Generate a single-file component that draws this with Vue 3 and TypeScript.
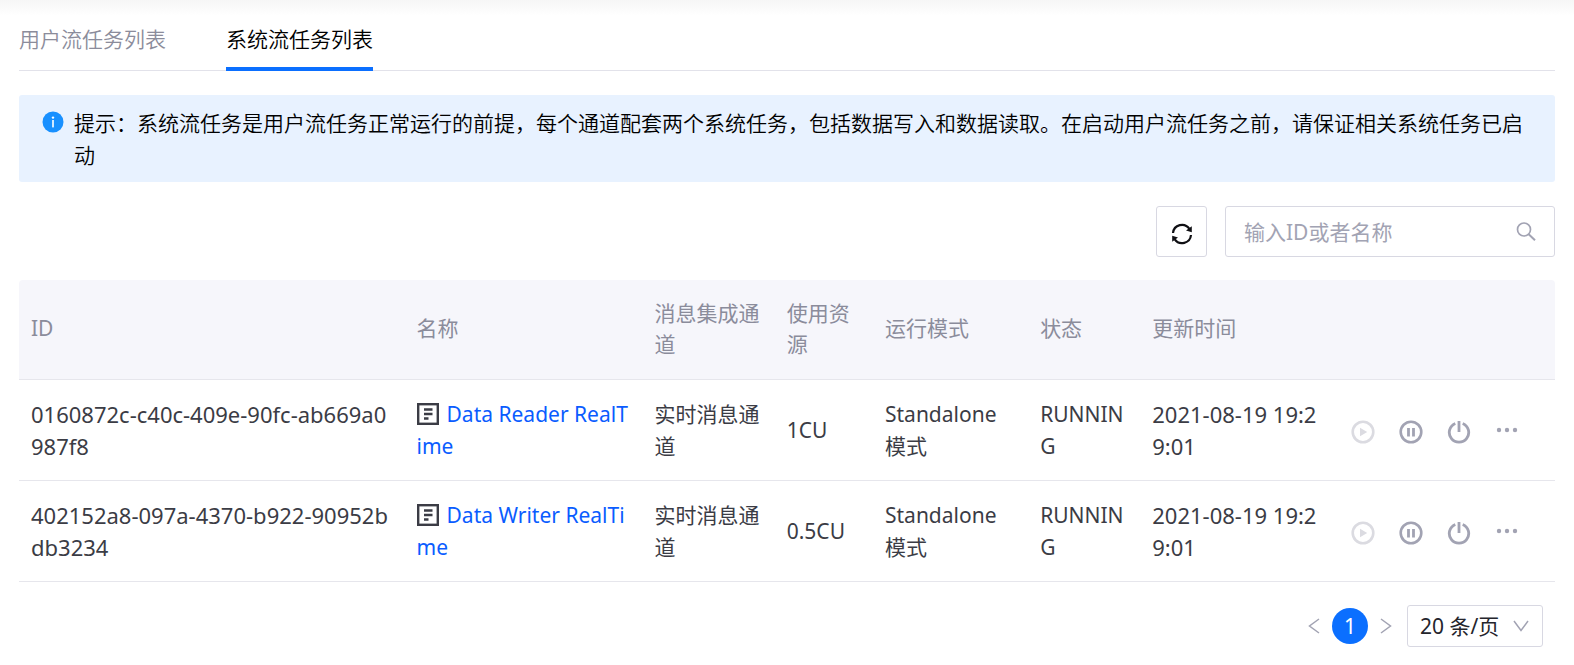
<script setup lang="ts">
import { computed, ref } from 'vue'

interface Task {
  id: string
  name: string
  channel: string
  resource: string
  mode: string
  status: string
  updated: string
}

const tabs = ['用户流任务列表', '系统流任务列表']
const activeTab = ref(1)
const keyword = ref('')
const pageSize = ref(20)

const columns = [
  { key: 'id', label: 'ID' },
  { key: 'name', label: '名称' },
  { key: 'channel', label: '消息集成通道' },
  { key: 'resource', label: '使用资源' },
  { key: 'mode', label: '运行模式' },
  { key: 'status', label: '状态' },
  { key: 'updated', label: '更新时间' },
]

const tasks: Task[] = [
  {
    id: '0160872c-c40c-409e-90fc-ab669a0987f8',
    name: 'Data Reader RealTime',
    channel: '实时消息通道',
    resource: '1CU',
    mode: 'Standalone模式',
    status: 'RUNNING',
    updated: '2021-08-19 19:29:01',
  },
  {
    id: '402152a8-097a-4370-b922-90952bdb3234',
    name: 'Data Writer RealTime',
    channel: '实时消息通道',
    resource: '0.5CU',
    mode: 'Standalone模式',
    status: 'RUNNING',
    updated: '2021-08-19 19:29:01',
  },
]

const visibleTasks = computed(() =>
  tasks.filter((t) => t.id.includes(keyword.value) || t.name.includes(keyword.value)),
)
</script>

<template>
  <main class="page">
    <div class="tabs" role="tablist">
      <button
        v-for="(tab, i) in tabs"
        :key="tab"
        type="button"
        role="tab"
        class="tab"
        :class="{ active: i === activeTab }"
        :aria-selected="i === activeTab"
        @click="activeTab = i"
      >{{ tab }}</button>
    </div>

    <div class="notice" role="note">
      <svg class="notice-icon" viewBox="0 0 22 22" aria-hidden="true">
        <circle cx="11" cy="11" r="10.5" fill="#1890ff" />
        <circle cx="11" cy="6.6" r="1.2" fill="#fff" />
        <rect x="10.2" y="9" width="1.6" height="7.4" fill="#fff" />
      </svg>
      <p class="notice-text">提示：系统流任务是用户流任务正常运行的前提，每个通道配套两个系统任务，包括数据写入和数据读取。在启动用户流任务之前，请保证相关系统任务已启动</p>
    </div>

    <div class="toolbar">
      <button type="button" class="refresh" aria-label="刷新">
        <svg viewBox="0 0 22 22" aria-hidden="true">
          <path d="M2 10a9 9 0 0 1 16.4-4.2M20 12a9 9 0 0 1-16.4 4.2" fill="none" stroke="currentColor" stroke-width="2.2" />
          <path d="M20.800 3.200v6l-5.800-1.800zM1.200 18.800v-6l5.800 1.800z" fill="currentColor" />
        </svg>
      </button>
      <label class="search">
        <input v-model="keyword" type="text" placeholder="输入ID或者名称" aria-label="输入ID或者名称" />
        <svg viewBox="0 0 20 20" aria-hidden="true">
          <circle cx="8" cy="7.500" r="6.500" fill="none" stroke="currentColor" stroke-width="1.700" />
          <path d="M12.700 12.200l6.300 6" fill="none" stroke="currentColor" stroke-width="2" />
        </svg>
      </label>
    </div>

    <table class="tasks">
      <colgroup>
        <col v-for="c in columns" :key="c.key" :class="'col-' + c.key" />
        <col class="col-actions" />
      </colgroup>
      <thead>
        <tr>
          <th v-for="c in columns" :key="c.key" scope="col">{{ c.label }}</th>
          <th scope="col" aria-label="操作"></th>
        </tr>
      </thead>
      <tbody>
        <tr v-for="t in visibleTasks" :key="t.id">
          <td class="numeric">{{ t.id }}</td>
          <td>
            <svg class="doc" viewBox="0 0 22 22" aria-hidden="true">
              <rect x="1.200" y="1.200" width="19.600" height="19.600" fill="none" stroke="currentColor" stroke-width="2.400" />
              <path d="M7 6.500h8.500M7 11h8.500M7 15.500h4.500" fill="none" stroke="currentColor" stroke-width="2.400" />
            </svg><a href="#">{{ t.name }}</a>
          </td>
          <td>{{ t.channel }}</td>
          <td>{{ t.resource }}</td>
          <td>{{ t.mode }}</td>
          <td>{{ t.status }}</td>
          <td class="numeric">{{ t.updated }}</td>
          <td class="actions-cell">
            <div class="actions">
              <button type="button" aria-label="启动" disabled>
                <svg viewBox="0 0 24 24" aria-hidden="true">
                  <circle cx="12" cy="12" r="10.300" fill="none" stroke="currentColor" stroke-width="2.600" />
                  <path d="M9 7.800v8.400l7.200-4.200z" fill="currentColor" />
                </svg>
              </button>
              <button type="button" aria-label="暂停">
                <svg viewBox="0 0 24 24" aria-hidden="true">
                  <circle cx="12" cy="12" r="10.300" fill="none" stroke="currentColor" stroke-width="2.600" />
                  <path d="M9.500 8v8.400M14.500 8v8.400" fill="none" stroke="currentColor" stroke-width="2.800" />
                </svg>
              </button>
              <button type="button" aria-label="停止">
                <svg viewBox="0 0 24 24" aria-hidden="true">
                  <path d="M8.300 3.500a9.700 9.700 0 1 0 7.400 0M12 1v11" fill="none" stroke="currentColor" stroke-width="2.800" />
                </svg>
              </button>
              <button type="button" class="more" aria-label="更多">
                <svg viewBox="0 0 24 24" aria-hidden="true">
                  <circle cx="4" cy="12" r="2.200" fill="currentColor" />
                  <circle cx="12" cy="12" r="2.200" fill="currentColor" />
                  <circle cx="20" cy="12" r="2.200" fill="currentColor" />
                </svg>
              </button>
            </div>
          </td>
        </tr>
      </tbody>
    </table>

    <nav class="pager" aria-label="分页">
      <button type="button" class="arrow" aria-label="上一页">
        <svg viewBox="0 0 12 16" aria-hidden="true"><path d="M11 1L1.500 8l9.500 7" fill="none" stroke="currentColor" stroke-width="1.500" /></svg>
      </button>
      <button type="button" class="current" aria-current="page">1</button>
      <button type="button" class="arrow" aria-label="下一页">
        <svg viewBox="0 0 12 16" aria-hidden="true"><path d="M1 1l9.500 7L1 15" fill="none" stroke="currentColor" stroke-width="1.500" /></svg>
      </button>
      <div class="size">
        <select v-model="pageSize" aria-label="每页条数">
          <option :value="20">20 条/页</option>
          <option :value="50">50 条/页</option>
        </select>
        <svg viewBox="0 0 16 12" aria-hidden="true"><path d="M1 1l7 9.500L15 1" fill="none" stroke="currentColor" stroke-width="1.500" /></svg>
      </div>
    </nav>
  </main>
</template>

<style>
body {
  background: #fff;
}
</style>

<style scoped>
.page {
  box-sizing: border-box;
  padding: 10px 19px 18px;
  font-family: 'Noto Sans', 'Noto Sans CJK SC', sans-serif;
  font-size: 21px;
  line-height: 32px;
  color: #3b3c45;
  background: linear-gradient(#f6f6f6, #fff 16px);
}

.page * {
  box-sizing: border-box;
}

button,
input,
select {
  margin: 0;
  padding: 0;
  font: inherit;
  color: inherit;
  background: none;
  border: 0;
}

svg {
  display: block;
}

.tabs,
.notice-text {
  font-family: 'Noto Sans CJK SC', sans-serif;
  font-weight: 350;
}

.tabs {
  display: flex;
  gap: 60px;
  height: 61px;
  box-shadow: inset 0 -1px #e2e2ea;
}

.tab {
  padding-bottom: 2px;
  border-bottom: 4px solid transparent;
  color: #8b8c9b;
}

.tab.active {
  color: #000;
  border-bottom-color: #0b6fff;
}

.notice {
  display: flex;
  gap: 10px;
  margin-top: 24px;
  padding: 11px 24px 12px 23px;
  border-radius: 3px;
  background: #e8f2ff;
  color: #000;
}

.notice-icon {
  flex: none;
  width: 22px;
  height: 22px;
  margin-top: 5px;
}

.notice-text {
  margin: 0;
}

.toolbar {
  display: flex;
  justify-content: flex-end;
  gap: 18px;
  margin: 24px 0 23px;
}

.refresh,
.search {
  display: flex;
  align-items: center;
  height: 51px;
  border: 1px solid #d8d8e2;
  border-radius: 3px;
}

.refresh {
  justify-content: center;
  width: 51px;
  padding-top: 5px;
  color: #101014;
}

.refresh svg {
  width: 22px;
  height: 22px;
}

.search {
  width: 330px;
  padding: 0 18px;
  color: #a2a3b3;
}

.search input {
  flex: 1;
  min-width: 0;
  outline: none;
}

.search input::placeholder {
  color: #a2a3b3;
  opacity: 1;
}

.search svg {
  width: 20px;
  height: 20px;
}

.tasks {
  width: 100%;
  table-layout: fixed;
  border-collapse: separate;
  border-spacing: 0;
  word-break: break-all;
}

.col-id { width: 25.1%; }
.col-name { width: 15.5%; }
.col-channel { width: 8.6%; }
.col-resource { width: 6.4%; }
.col-mode { width: 10.1%; }
.col-status { width: 7.3%; }
.col-updated { width: 13%; }
.col-actions { width: 14%; }

.tasks th,
.tasks td {
  height: 100px;
  padding: 16px 12px;
  border-bottom: 1px solid #e6e6ec;
  text-align: left;
  vertical-align: middle;
}

.tasks th {
  padding-bottom: 18px;
  background: #f6f6fb;
  color: #8b8c9b;
  font-weight: 400;
  line-height: 31px;
}

.tasks th:first-child {
  border-top-left-radius: 4px;
}

.tasks th:last-child {
  border-top-right-radius: 4px;
}

.tasks td {
  height: 101px;
}

.tasks .numeric {
  padding-right: 16px;
  font-size: 22px;
}

.doc {
  display: inline-block;
  width: 22px;
  height: 22px;
  margin-right: 8px;
  vertical-align: -3px;
}

.tasks a {
  color: #0a5cff;
  text-decoration: none;
}

.tasks .actions-cell {
  padding: 0 12px 0 7px;
}

.actions {
  display: flex;
  gap: 24px;
  padding: 4px 0 0 4px;
  color: #a2a3b3;
}

.actions button,
.actions svg {
  width: 24px;
  height: 24px;
}

.actions button:disabled {
  color: #dbdbe1;
}

.actions .more {
  margin-top: -2px;
}

.pager {
  display: flex;
  align-items: center;
  justify-content: flex-end;
  gap: 12px;
  margin-top: 23px;
  padding-right: 12px;
}

.arrow {
  color: #a2a3b3;
}

.arrow svg {
  width: 12px;
  height: 16px;
}

.current {
  width: 36px;
  height: 36px;
  border-radius: 50%;
  background: #0b6fff;
  color: #fff;
}

.size {
  display: grid;
  grid-template-columns: 1fr 16px;
  align-items: center;
  width: 136px;
  height: 42px;
  margin-left: 3px;
  padding-right: 13px;
  border: 1px solid #d8d8e2;
  border-radius: 3px;
  color: #24252c;
}

.size select {
  grid-area: 1 / 1 / 2 / 3;
  height: 40px;
  padding-left: 12px;
  appearance: none;
  outline: none;
}

.size svg {
  grid-area: 1 / 2;
  width: 16px;
  height: 12px;
  color: #a2a3b3;
  pointer-events: none;
}
</style>
